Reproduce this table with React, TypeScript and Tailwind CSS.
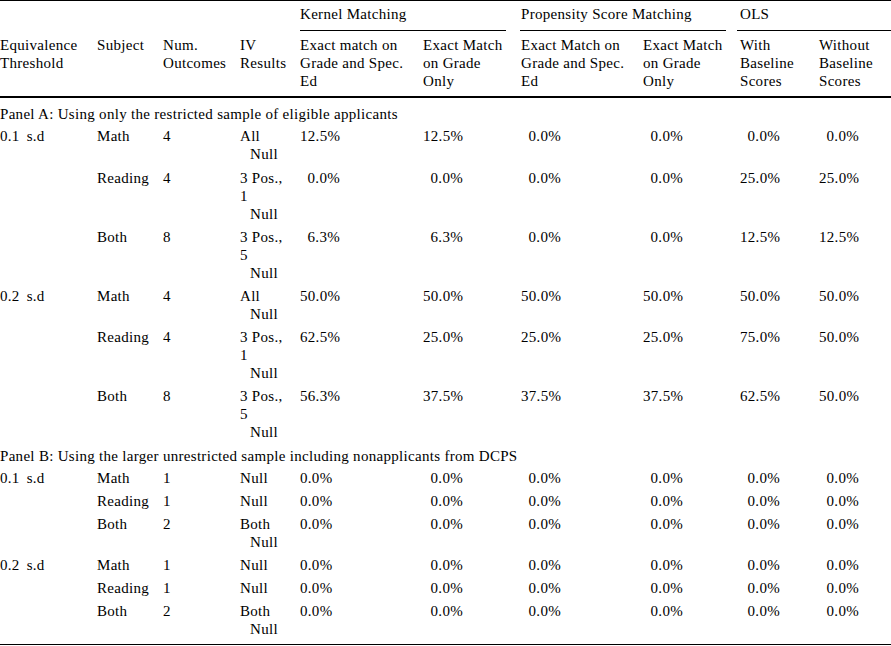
import React from 'react';

type Line = [string, boolean];
type Row = { t?: string; s: string; n: string; iv: Line[]; v: string[]; extra?: boolean };

const panelA: Row[] = [
  { t: '0.1', s: 'Math', n: '4', iv: [['All', false], ['Null', true]], v: ['12.5%', '12.5%', '0.0%', '0.0%', '0.0%', '0.0%'], extra: true },
  { s: 'Reading', n: '4', iv: [['3 Pos.,', false], ['1', false], ['Null', true]], v: ['0.0%', '0.0%', '0.0%', '0.0%', '25.0%', '25.0%'] },
  { s: 'Both', n: '8', iv: [['3 Pos.,', false], ['5', false], ['Null', true]], v: ['6.3%', '6.3%', '0.0%', '0.0%', '12.5%', '12.5%'] },
  { t: '0.2', s: 'Math', n: '4', iv: [['All', false], ['Null', true]], v: ['50.0%', '50.0%', '50.0%', '50.0%', '50.0%', '50.0%'] },
  { s: 'Reading', n: '4', iv: [['3 Pos.,', false], ['1', false], ['Null', true]], v: ['62.5%', '25.0%', '25.0%', '25.0%', '75.0%', '50.0%'] },
  { s: 'Both', n: '8', iv: [['3 Pos.,', false], ['5', false], ['Null', true]], v: ['56.3%', '37.5%', '37.5%', '37.5%', '62.5%', '50.0%'] },
];

const z = ['0.0%', '0.0%', '0.0%', '0.0%', '0.0%', '0.0%'];
const panelB: Row[] = [
  { t: '0.1', s: 'Math', n: '1', iv: [['Null', false]], v: z },
  { s: 'Reading', n: '1', iv: [['Null', false]], v: z },
  { s: 'Both', n: '2', iv: [['Both', false], ['Null', true]], v: z },
  { t: '0.2', s: 'Math', n: '1', iv: [['Null', false]], v: z },
  { s: 'Reading', n: '1', iv: [['Null', false]], v: z },
  { s: 'Both', n: '2', iv: [['Both', false], ['Null', true]], v: z },
];

function DataRow({ r, firstLeft }: { r: Row; firstLeft: boolean }) {
  const pad = r.extra ? 'pt-[3px] pb-[3px]' : 'pt-[3px] pb-[2px]';
  return (
    <tr className="align-top">
      <td className={pad}>
        {r.t ? (
          <span>
            {r.t}
            <span className="ml-[7px]">s.d</span>
          </span>
        ) : null}
      </td>
      <td className={pad}>{r.s}</td>
      <td className={pad}>{r.n}</td>
      <td className={pad}>
        {r.iv.map(([txt, ind], i) => (
          <div key={i} className={ind ? 'pl-[10px]' : ''}>
            {txt}
          </div>
        ))}
      </td>
      {r.v.map((v, i) => (
        <td key={i} className={pad}>
          {firstLeft && i === 0 ? <div>{v}</div> : <div className="w-[40px] text-right">{v}</div>}
        </td>
      ))}
    </tr>
  );
}

function PanelRow({ text, top }: { text: string; top: string }) {
  return (
    <tr>
      <td colSpan={10} className={top + ' pb-[1px] whitespace-nowrap'}>
        {text}
      </td>
    </tr>
  );
}

export default function App() {
  return (
    <div className="w-[891px] h-[646px] bg-white text-black text-[15px] leading-[18px] tracking-[0.3px] overflow-hidden font-['Liberation_Serif','Tinos','Times_New_Roman',serif]">
      <div className="h-[1px] bg-black" />
      <table className="table-fixed border-collapse w-[891px]">
        <colgroup>
          <col className="w-[97px]" />
          <col className="w-[66px]" />
          <col className="w-[77px]" />
          <col className="w-[60px]" />
          <col className="w-[123px]" />
          <col className="w-[98px]" />
          <col className="w-[122px]" />
          <col className="w-[97px]" />
          <col className="w-[79px]" />
          <col className="w-[72px]" />
        </colgroup>
        <thead>
          <tr className="align-top">
            <td colSpan={4} />
            <td colSpan={2} className="pt-[4px]">
              <div className="mr-[15px] border-b border-black pb-[7px]">Kernel Matching</div>
            </td>
            <td colSpan={2} className="pt-[4px]">
              <div className="mr-[14px] -ml-[1px] pl-[1px] border-b border-black pb-[7px]">Propensity Score Matching</div>
            </td>
            <td colSpan={2} className="pt-[4px]">
              <div className="-ml-[3px] pl-[3px] border-b border-black pb-[7px]">OLS</div>
            </td>
          </tr>
          <tr className="align-top border-b-2 border-black">
            <td className="pt-[5px] pb-[6px]">
              <div>Equivalence</div>
              <div>Threshold</div>
            </td>
            <td className="pt-[5px] pb-[6px]">Subject</td>
            <td className="pt-[5px] pb-[6px]">
              <div>Num.</div>
              <div>Outcomes</div>
            </td>
            <td className="pt-[5px] pb-[6px]">
              <div>IV</div>
              <div>Results</div>
            </td>
            <td className="pt-[5px] pb-[6px]">
              <div>Exact match on</div>
              <div>Grade and Spec.</div>
              <div>Ed</div>
            </td>
            <td className="pt-[5px] pb-[6px]">
              <div>Exact Match</div>
              <div>on Grade</div>
              <div>Only</div>
            </td>
            <td className="pt-[5px] pb-[6px]">
              <div>Exact Match on</div>
              <div>Grade and Spec.</div>
              <div>Ed</div>
            </td>
            <td className="pt-[5px] pb-[6px]">
              <div>Exact Match</div>
              <div>on Grade</div>
              <div>Only</div>
            </td>
            <td className="pt-[5px] pb-[6px]">
              <div>With</div>
              <div>Baseline</div>
              <div>Scores</div>
            </td>
            <td className="pt-[5px] pb-[6px]">
              <div>Without</div>
              <div>Baseline</div>
              <div>Scores</div>
            </td>
          </tr>
        </thead>
        <tbody>
          <PanelRow top="pt-[7px]" text="Panel A: Using only the restricted sample of eligible applicants" />
          {panelA.map((r, i) => (
            <DataRow key={'a' + i} r={r} firstLeft={false} />
          ))}
          <PanelRow top="pt-[4px]" text="Panel B: Using the larger unrestricted sample including nonapplicants from DCPS" />
          {panelB.map((r, i) => (
            <DataRow key={'b' + i} r={r} firstLeft={true} />
          ))}
          <tr className="border-b border-black">
            <td colSpan={10} className="h-[4px] p-0" />
          </tr>
        </tbody>
      </table>
    </div>
  );
}
